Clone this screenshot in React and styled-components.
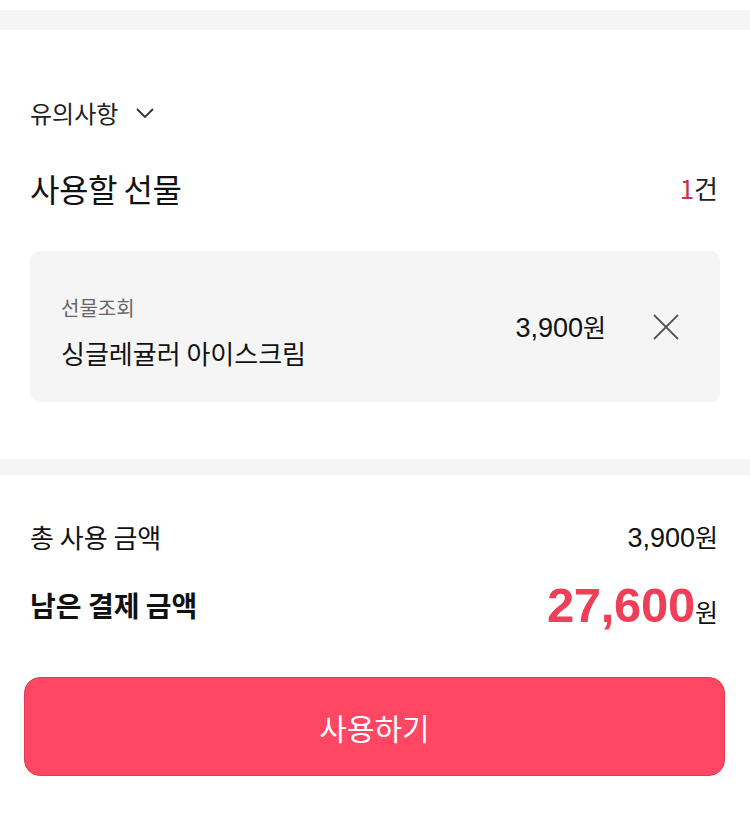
import styled, { createGlobalStyle } from "styled-components";

const GlobalStyle = createGlobalStyle`
  body {
    margin: 0;
    background: #fff;
    font-family: "Noto Sans CJK KR", "Noto Sans", sans-serif;
    color: #111;
  }
`;

const Page = styled.div`
  width: 750px;
  padding-top: 10px;
  padding-bottom: 64px;
`;

const Band = styled.div`
  height: ${(p) => p.$h}px;
  background: #f5f5f5;
`;

const Section = styled.section`
  padding: ${(p) => p.$pad};
`;

const NoticeToggle = styled.button`
  display: flex;
  align-items: center;
  gap: 18px;
  border: none;
  background: none;
  padding: 0;
  font-family: inherit;
  font-size: 24px;
  line-height: 30px;
  color: #222;
  cursor: pointer;
`;

const Header = styled.div`
  display: flex;
  justify-content: space-between;
  align-items: center;
  margin-top: 41px;
  padding-right: 2px;
`;

const Title = styled.h2`
  margin: 0;
  font-size: 32px;
  line-height: 38px;
  font-weight: 400;
  letter-spacing: -0.5px;
`;

const Count = styled.span`
  font-size: 26px;
  line-height: 38px;
  color: #222;
  em {
    font-style: normal;
    color: #c8334f;
  }
`;

const Card = styled.div`
  margin-top: 44px;
  height: 151px;
  box-sizing: border-box;
  background: #f5f5f5;
  border-radius: 10px;
  padding: 0 40px 0 31px;
  display: flex;
  align-items: center;
  justify-content: space-between;
`;

const ItemInfo = styled.div`
  display: flex;
  flex-direction: column;
  gap: 14px;
  padding-top: 10px;
`;

const Brand = styled.span`
  font-size: 20px;
  line-height: 28px;
  color: #666;
`;

const ItemName = styled.span`
  font-size: 26px;
  line-height: 34px;
  color: #111;
`;

const ItemSide = styled.div`
  display: flex;
  align-items: center;
  gap: 46px;
`;

const Money = styled.span`
  font-size: 25px;
  line-height: 34px;
  b {
    font-family: "Liberation Sans", sans-serif;
    font-weight: 400;
    font-size: 27px;
  }
`;

const CloseButton = styled.button`
  border: none;
  background: none;
  padding: 0;
  width: 28px;
  height: 28px;
  display: flex;
  cursor: pointer;
`;

const SummaryRow = styled.div`
  display: flex;
  justify-content: space-between;
  align-items: center;
  margin-top: ${(p) => p.$mt}px;
  padding-right: 2px;
`;

const Label = styled.span`
  font-size: ${(p) => (p.$strong ? 28 : 26)}px;
  font-weight: ${(p) => (p.$strong ? 700 : 400)};
  line-height: 40px;
  color: #111;
`;

const Amount = styled.span`
  font-size: 25px;
  line-height: 40px;
  display: flex;
  align-items: baseline;
`;

const BigNumber = styled.span`
  font-family: "Liberation Sans", "Noto Sans CJK KR", sans-serif;
  font-size: 49px;
  font-weight: 700;
  color: #ee3f59;
  line-height: 56px;
  letter-spacing: -0.3px;
`;

const SubmitButton = styled.button`
  display: block;
  width: 701px;
  height: 99px;
  margin: 44px 0 0 24px;
  border: 1px solid #e23a52;
  border-radius: 16px;
  background: #ff4662;
  color: #fff;
  font-family: inherit;
  font-size: 30px;
  cursor: pointer;
`;

export default function App() {
  return (
    <Page>
      <GlobalStyle />
      <Band $h={20} />
      <Section $pad="68px 30px 57px">
        <NoticeToggle>
          유의사항
          <svg width="18" height="10" viewBox="0 0 18 10" fill="none">
            <path d="M1 1l8 8 8-8" stroke="#333" strokeWidth="1.8" />
          </svg>
        </NoticeToggle>
        <Header>
          <Title>사용할 선물</Title>
          <Count>
            <em>1</em>건
          </Count>
        </Header>
        <Card>
          <ItemInfo>
            <Brand>선물조회</Brand>
            <ItemName>싱글레귤러 아이스크림</ItemName>
          </ItemInfo>
          <ItemSide>
            <Money>
              <b>3,900</b>원
            </Money>
            <CloseButton aria-label="삭제">
              <svg width="28" height="28" viewBox="0 0 28 28" fill="none">
                <path d="M2 2l24 24M26 2L2 26" stroke="#555" strokeWidth="1.8" />
              </svg>
            </CloseButton>
          </ItemSide>
        </Card>
      </Section>
      <Band $h={16} />
      <Section $pad="42px 30px 0">
        <SummaryRow $mt={0}>
          <Label>총 사용 금액</Label>
          <Money>
            <b>3,900</b>원
          </Money>
        </SummaryRow>
        <SummaryRow $mt={20}>
          <Label $strong>남은 결제 금액</Label>
          <Amount>
            <BigNumber>27,600</BigNumber>원
          </Amount>
        </SummaryRow>
      </Section>
      <SubmitButton>사용하기</SubmitButton>
    </Page>
  );
}
